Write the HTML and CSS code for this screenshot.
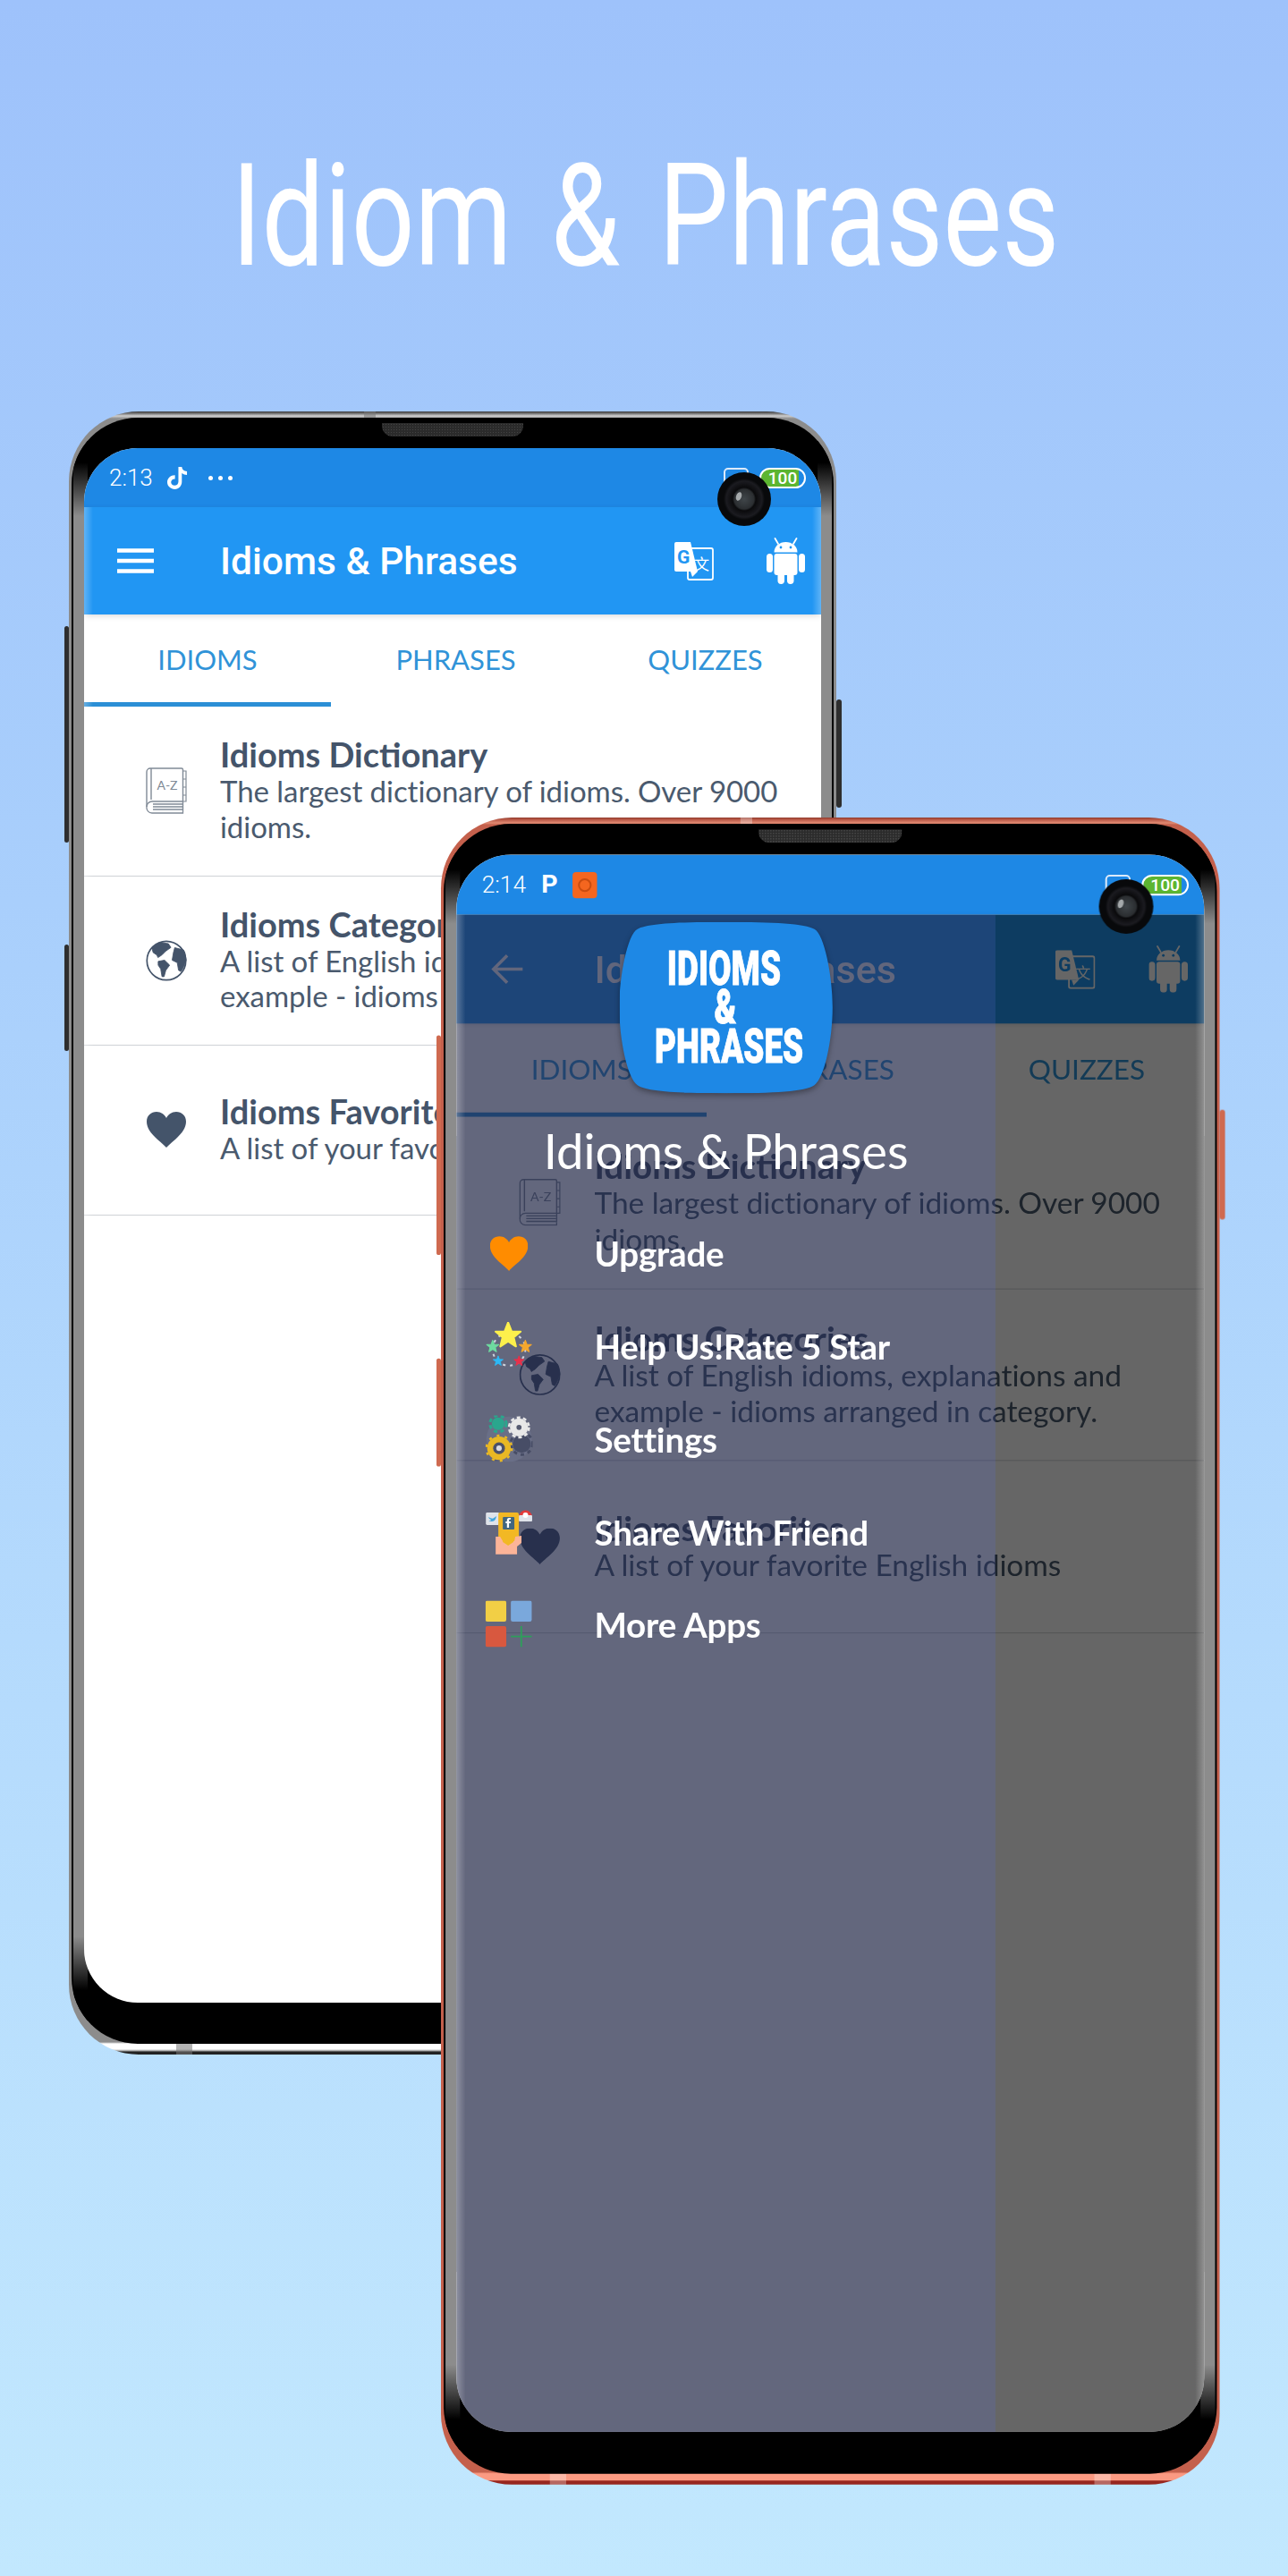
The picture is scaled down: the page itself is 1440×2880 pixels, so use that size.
FILE: index.html
```html
<!DOCTYPE html>
<html lang="en">
<head>
<meta charset="utf-8">
<title>Idiom &amp; Phrases</title>
<link rel="stylesheet" href="styles.css">
</head>
<body>
<svg class="defs" aria-hidden="true">
  <defs>
    <symbol id="android" viewBox="0 0 43 52">
      <path d="M8.500 16.500a13 11.500 0 0 1 26 0z" fill="#fff"/>
      <path d="M13 7 9.500 1M30 7l3.500-6" stroke="#fff" stroke-width="1.800" stroke-linecap="round"/>
      <circle cx="16" cy="11" r="1.400" fill="#2196f3"/><circle cx="27" cy="11" r="1.400" fill="#2196f3"/>
      <rect x="8.500" y="18" width="26" height="24" rx="3" fill="#fff"/>
      <rect x="0" y="18" width="7" height="21" rx="3.500" fill="#fff"/>
      <rect x="36" y="18" width="7" height="21" rx="3.500" fill="#fff"/>
      <rect x="12.500" y="36" width="7.500" height="16" rx="3.700" fill="#fff"/>
      <rect x="23" y="36" width="7.500" height="16" rx="3.700" fill="#fff"/>
    </symbol>
    <symbol id="translate" viewBox="0 0 44 43">
      <rect x="15" y="7" width="28" height="35" rx="2" fill="#2196f3" stroke="#fff" stroke-width="1.800"/>
      <path d="M2 0h16l8 33H2a2 2 0 0 1-2-2V2a2 2 0 0 1 2-2z" fill="#fff"/>
      <path d="M18 33h8l-6 6z" fill="#fff"/>
      <text x="3" y="24" class="svg-g">G</text>
      <text x="22" y="31" class="svg-wen">文</text>
    </symbol>
    <symbol id="book" viewBox="0 0 46 52">
      <path d="M1 44V5a4 4 0 0 1 4-4h35a1.500 1.500 0 0 1 1.500 1.500V48M6 1v35" fill="none" stroke="#808a96" stroke-width="1.400"/>
      <path d="M1 44a6 6 0 0 1 6-6h34.500M1 44a6 6 0 0 0 6 7h34.500V48M8 41h33M8 44h33M8 47h33" fill="none" stroke="#808a96" stroke-width="1.300"/>
      <path d="M41.500 4h3.500v9h-3.500M41.500 13h3.500v9h-3.500M41.500 22h3.500v9h-3.500M41.500 31h3.500v7h-3.500" fill="none" stroke="#808a96" stroke-width="1.200"/>
      <text x="24" y="25" class="svg-az">A-Z</text>
    </symbol>
    <symbol id="globe" viewBox="0 0 54 54">
      <circle cx="27" cy="27" r="25.500" fill="none" stroke="#44546a" stroke-width="2"/>
      <path d="M8 10l10-7 11.600 1.700L33 9.700l-7 5-5 5-5 3.300-1.400-3.300-5-3.400zM16.300 28l8.300-1.600 6.700 6.600-5 6.700L24 48h-2.700l-1.700-10-3.300-5zM38 10l11.600 3 1.700 3.400L53 26l-3 8.700-3.700 6.700-3.300-1.700-1.700-10-6.700-3.300 1.700-10z" fill="#44546a" stroke="#44546a" stroke-width="1" stroke-linejoin="round"/>
    </symbol>
    <symbol id="heart" viewBox="0 0 44 40">
      <path d="M22 40C16 33 0 24 0 11 0 4 5 0 11 0c5 0 9 3 11 7 2-4 6-7 11-7 6 0 11 4 11 11 0 13-16 22-22 29z"/>
    </symbol>
    <symbol id="stars" viewBox="0 0 52 52">
      <circle cx="26" cy="30" r="18" fill="none" stroke="#cfd3de" stroke-width="2" stroke-dasharray="3 5"/>
      <polygon transform="translate(25 15) scale(1.450)" points="0,-10 2.600,-3.300 9.500,-3.100 4.200,1.300 5.900,8.100 0,4.300 -5.900,8.100 -4.200,1.300 -9.500,-3.100 -2.600,-3.300" fill="#fdf04c" stroke="#fdf04c" stroke-width="1.500" stroke-linejoin="round"/>
      <polygon transform="translate(8 27) scale(.7)" points="0,-10 2.600,-3.300 9.500,-3.100 4.200,1.300 5.900,8.100 0,4.300 -5.900,8.100 -4.200,1.300 -9.500,-3.100 -2.600,-3.300" fill="#6edba0" stroke="#6edba0" stroke-width="1.500" stroke-linejoin="round"/>
      <polygon transform="translate(44 27) scale(.7)" points="0,-10 2.600,-3.300 9.500,-3.100 4.200,1.300 5.900,8.100 0,4.300 -5.900,8.100 -4.200,1.300 -9.500,-3.100 -2.600,-3.300" fill="#f6a72c" stroke="#f6a72c" stroke-width="1.500" stroke-linejoin="round"/>
      <polygon transform="translate(14 43) scale(.58)" points="0,-10 2.600,-3.300 9.500,-3.100 4.200,1.300 5.900,8.100 0,4.300 -5.900,8.100 -4.200,1.300 -9.500,-3.100 -2.600,-3.300" fill="#2db8f5" stroke="#2db8f5" stroke-width="1.500" stroke-linejoin="round"/>
      <polygon transform="translate(37 43) scale(.58)" points="0,-10 2.600,-3.300 9.500,-3.100 4.200,1.300 5.900,8.100 0,4.300 -5.900,8.100 -4.200,1.300 -9.500,-3.100 -2.600,-3.300" fill="#e8304a" stroke="#e8304a" stroke-width="1.500" stroke-linejoin="round"/>
    </symbol>
    <symbol id="gears" viewBox="0 0 52 52">
      <circle cx="26" cy="26" r="25" fill="#6a6f87"/>
      <circle cx="40" cy="31" r="10" fill="#474d66"/>
      <circle cx="40" cy="31" r="12" fill="none" stroke="#474d66" stroke-width="3" stroke-dasharray="4 4"/>
      <circle cx="14" cy="9" r="7" fill="#2aa68d"/>
      <circle cx="14" cy="9" r="9" fill="none" stroke="#2aa68d" stroke-width="3" stroke-dasharray="4 3.500"/>
      <circle cx="37" cy="13" r="10" fill="#e8e8e8"/>
      <circle cx="37" cy="13" r="11" fill="none" stroke="#e8e8e8" stroke-width="2.500" stroke-dasharray="4 3"/>
      <circle cx="37" cy="13" r="2.800" fill="#555a70"/>
      <circle cx="15" cy="36" r="13" fill="#e9b824"/>
      <circle cx="15" cy="36" r="14" fill="none" stroke="#e9b824" stroke-width="2.500" stroke-dasharray="3 6"/>
      <circle cx="15" cy="36" r="6.500" fill="#4b5068"/>
      <circle cx="15" cy="36" r="3" fill="#d8dae2"/>
    </symbol>
    <symbol id="share" viewBox="0 0 52 53">
      <rect x="0" y="5" width="15" height="14" rx="1.500" fill="#dfe3ea"/>
      <path d="M3 10c3 2 5 2 6 1l3-2-1 3c-1 3-5 4-8 2 2 0 3-.5 3-1-2-.5-3-2-3-3z" fill="#43a5dc"/>
      <path d="M37 10a7.500 7.500 0 0 1 15 0z" fill="#e23b3b"/>
      <rect x="37" y="8" width="15" height="7" rx="1" fill="#dfe3ea"/>
      <circle cx="44.500" cy="8" r="3" fill="#fff"/>
      <rect x="14" y="5" width="23" height="37" rx="2" fill="#f2b824"/>
      <rect x="19" y="10" width="13" height="14" rx="1" fill="#41667f"/>
      <path d="M26 22v-5h2v-2h-2v-1.500c0-.5.3-.8 1-.8h1V11h-2c-1.500 0-2.300 1-2.300 2.400V15h-1.500v2h1.500v5z" fill="#fff"/>
      <path d="M11 32h5l3 5h13l1-5 7-1v8l-5 4v9H11z" fill="#fcb498"/>
      <path d="M19 33h12v5l-6 4-6-4z" fill="#f2b824"/>
    </symbol>
    <symbol id="apps" viewBox="0 0 52 52">
      <rect x="0" y="0" width="23" height="23" rx="2" fill="#f2cf45"/>
      <rect x="28" y="0" width="23" height="23" rx="2" fill="#7aa8dc"/>
      <rect x="0" y="28" width="23" height="23" rx="2" fill="#d8583f"/>
      <path d="M39.500 28v23M28 39.500h23" stroke="#2e9e5b" stroke-width="1.800"/>
    </symbol>
  </defs>
</svg>

<header class="hero"><h1 class="hero-title">Idiom &amp; Phrases</h1></header>

<section class="phone phone-black">
  <span class="btn btn-l1"></span><span class="btn btn-l2"></span><span class="btn btn-r"></span>
  <span class="strip strip-top"></span><span class="strip strip-bl"></span><span class="strip strip-br"></span>
  <div class="glass">
    <span class="earpiece"></span>
    <div class="screen">
      <div class="status">
        <span class="time">2:13</span>
        <svg class="ic-tiktok" viewBox="0 0 24 26"><path d="M13 0h4c.3 3 2.300 5 6 5.300v4c-2.300 0-4.300-.7-6-2v10c0 5-3.500 8.700-8.200 8.700C4 26 0 22.500 0 17.800S4 9.500 9 9.600V14c-2.400-.2-4.600 1.300-4.600 3.800 0 2.300 1.900 3.900 4.100 3.900 2.500 0 4.500-1.700 4.500-4.500z" fill="#fff"/></svg>
        <span class="dots"><i></i><i></i><i></i></span>
        <span class="status-right"><span class="sim"></span><span class="battery">100</span></span>
      </div>
      <div class="appbar">
        <svg class="ic-nav" viewBox="0 0 41 28"><path d="M0 2.500h41M0 14h41M0 25.500h41" stroke="#fff" stroke-width="4.500"/></svg>
        <span class="app-title">Idioms &amp; Phrases</span>
        <svg class="ic-tr"><use href="#translate"/></svg>
        <svg class="ic-an"><use href="#android"/></svg>
      </div>
      <div class="tabs">
        <span class="tab tab-on">IDIOMS</span><span class="tab">PHRASES</span><span class="tab">QUIZZES</span>
      </div>
      <div class="row"><svg class="row-ic"><use href="#book"/></svg><div class="row-text"><h2 class="row-title">Idioms Dictionary</h2><p class="row-sub">The largest dictionary of idioms. Over 9000 idioms.</p></div></div>
      <div class="row"><svg class="row-ic"><use href="#globe"/></svg><div class="row-text"><h2 class="row-title">Idioms Categories</h2><p class="row-sub">A list of English idioms, explanations and example - idioms arranged in category.</p></div></div>
      <div class="row"><svg class="row-ic row-heart"><use href="#heart"/></svg><div class="row-text"><h2 class="row-title">Idioms Favorites</h2><p class="row-sub">A list of your favorite English idioms</p></div></div>
      <span class="edge"></span>
    </div>
    <span class="camera"></span>
  </div>
</section>

<section class="phone phone-red">
  <span class="btn btn-l1"></span><span class="btn btn-l2"></span><span class="btn btn-r"></span>
  <span class="strip strip-top"></span><span class="strip strip-bl"></span><span class="strip strip-br"></span>
  <div class="glass">
    <span class="earpiece"></span>
    <div class="screen">
      <div class="status">
        <span class="time">2:14</span>
        <span class="ic-p">P</span>
        <span class="ic-orange"><i></i></span>
        <span class="status-right"><span class="sim"></span><span class="battery">100</span></span>
      </div>
      <div class="appbar">
        <svg class="ic-nav" viewBox="0 0 41 34"><path d="M36 17H5M19 2 4 17l15 15" fill="none" stroke="#fff" stroke-width="3.500"/></svg>
        <span class="app-title">Idioms &amp; Phrases</span>
        <svg class="ic-tr"><use href="#translate"/></svg>
        <svg class="ic-an"><use href="#android"/></svg>
      </div>
      <div class="tabs">
        <span class="tab tab-on">IDIOMS</span><span class="tab">PHRASES</span><span class="tab">QUIZZES</span>
      </div>
      <div class="row"><svg class="row-ic"><use href="#book"/></svg><div class="row-text"><h2 class="row-title">Idioms Dictionary</h2><p class="row-sub">The largest dictionary of idioms. Over 9000 idioms.</p></div></div>
      <div class="row"><svg class="row-ic"><use href="#globe"/></svg><div class="row-text"><h2 class="row-title">Idioms Categories</h2><p class="row-sub">A list of English idioms, explanations and example - idioms arranged in category.</p></div></div>
      <div class="row"><svg class="row-ic row-heart"><use href="#heart"/></svg><div class="row-text"><h2 class="row-title">Idioms Favorites</h2><p class="row-sub">A list of your favorite English idioms</p></div></div>
      <div class="scrim"></div>
      <nav class="drawer">
        <div class="logo-wrap"><div class="logo"><span class="logo-text"><span class="l1">IDIOMS</span><span class="l2">&amp;</span><span class="l3">PHRASES</span></span></div></div>
        <div class="drawer-title">Idioms &amp; Phrases</div>
        <a class="item"><svg class="item-heart"><use href="#heart"/></svg><span>Upgrade</span></a>
        <a class="item"><svg class="item-ic"><use href="#stars"/></svg><span>Help Us!Rate 5 Star</span></a>
        <a class="item"><svg class="item-ic"><use href="#gears"/></svg><span>Settings</span></a>
        <a class="item"><svg class="item-ic"><use href="#share"/></svg><span>Share With Friend</span></a>
        <a class="item"><svg class="item-ic"><use href="#apps"/></svg><span>More Apps</span></a>
      </nav>
      <span class="edge"></span>
    </div>
    <span class="camera"></span>
  </div>
</section>
</body>
</html>
```

FILE: styles.css
```css
* { box-sizing: border-box; }
html, body { margin: 0; padding: 0; }
body {
  position: relative;
  width: 1440px;
  height: 2880px;
  overflow: hidden;
  background: linear-gradient(180deg, #9ec2fb 0%, #a9cffc 35%, #c2e8fe 100%);
  font-family: "Lato", "Liberation Sans", sans-serif;
}
.defs { position: absolute; width: 0; height: 0; }
.svg-g { font: 700 21px "Roboto", sans-serif; fill: #2196f3; }
.svg-wen { font: 400 17px "Noto Sans CJK SC", sans-serif; fill: #fff; }
.svg-az { font: 400 14px "Lato", sans-serif; fill: #808a96; text-anchor: middle; }

/* hero */
.hero { height: 460px; padding-top: 162px; text-align: center; }
.hero-title {
  margin: 0 0 0 3px;
  font: 400 159px/159px "Roboto", sans-serif;
  color: #fff;
  word-spacing: 16px;
  transform: scaleX(.781);
  white-space: nowrap;
}

/* device */
.phone {
  position: relative;
  isolation: isolate;
  width: 858px;
  height: 1837px;
  padding: 7px 3px 12px;
  border-radius: 78px;
}
.phone-black {
  margin-left: 77px;
  background: linear-gradient(180deg, #3c3c3c 0, #6c6c6c 2px, #d0d0d0 5px, #8c8c8c 8px, #8c8c8c calc(100% - 14px), #fff calc(100% - 12px), #fff calc(100% - 6px), #999 calc(100% - 4px), #222 calc(100% - 3px), #222 100%);
}
.phone-red {
  position: absolute;
  z-index: 1;
  left: 493px;
  top: 914px;
  transform: scale(1.0146);
  transform-origin: 0 0;
  background: linear-gradient(180deg, #8e3a2c 0, #b65544 2px, #e08a72 6px, #c4604c 8px, #c4604c calc(100% - 14px), #fb9a82 calc(100% - 12px), #fb9a82 calc(100% - 5px), #97261f calc(100% - 4px), #97261f 100%);
}
.btn { position: absolute; border-radius: 3px; }
.phone-black .btn { background: #2e2e2e; }
.phone-red .btn { background: #cf6a50; }
.btn-l1 { left: -5px; top: 240px; width: 5px; height: 242px; }
.btn-l2 { left: -5px; top: 596px; width: 5px; height: 119px; }
.btn-r { right: -6px; top: 322px; width: 6px; height: 121px; }
.strip { position: absolute; background: rgba(255,255,255,.3); }
.phone-black .strip { background: rgba(120,120,120,.55); }
.strip-top { left: 330px; top: 0; width: 13px; height: 7px; }
.strip-bl { left: 120px; bottom: 0; width: 18px; height: 12px; }
.strip-br { left: 720px; bottom: 0; width: 18px; height: 12px; }

.glass {
  position: relative;
  height: 100%;
  padding: 34px 14px 46px;
  background: #000;
  border-radius: 74px;
  overflow: hidden;
}
.glass::before, .glass::after {
  content: "";
  position: absolute;
  top: 0;
  bottom: 0;
  width: 16px;
  background: linear-gradient(180deg, #000 50px, #8c8c8c 110px, #8c8c8c calc(100% - 120px), #000 calc(100% - 60px));
}
.glass::before { left: 2px; }
.glass::after { right: 2px; }
.earpiece {
  position: absolute;
  left: 50%;
  top: 6px;
  width: 158px;
  height: 15px;
  margin-left: -79px;
  border-radius: 0 0 12px 12px;
  background: #2b2b2b radial-gradient(circle, #444 0, #444 .8px, transparent 1px) 0 0 / 3px 3px;
}
.screen {
  position: relative;
  z-index: 1;
  display: flex;
  flex-direction: column;
  height: 100%;
  background: #fff;
  border-radius: 60px;
  overflow: hidden;
}
.edge {
  position: absolute;
  inset: 66px 0 0;
  background: linear-gradient(90deg, rgba(255,255,255,.28), rgba(255,255,255,0) 10px, rgba(255,255,255,0) calc(100% - 10px), rgba(255,255,255,.28));
}
.camera {
  position: absolute;
  z-index: 2;
  left: 722px;
  top: 61px;
  width: 60px;
  height: 60px;
  border-radius: 50%;
  background: radial-gradient(circle at 50% 50%, #40464a 0, #2b2e31 11px, #0a0a0c 13px, #1b1b20 20px, #08090b 23px);
}
.camera::after {
  content: "";
  position: absolute;
  left: 21px;
  top: 22px;
  width: 6px;
  height: 10px;
  border-radius: 50%;
  background: #a5a9ab;
  transform: rotate(20deg);
}

/* status bar */
.status {
  flex: none;
  display: flex;
  align-items: center;
  height: 66px;
  padding: 0 17px 0 28px;
  background: #1e88e5;
}
.time { font: 300 26px/1 "Roboto", sans-serif; color: #fff; }
.ic-tiktok { width: 23px; height: 25px; margin-left: 16px; }
.dots { display: flex; gap: 6px; margin-left: 23px; }
.dots i { width: 5px; height: 5px; border-radius: 50%; background: #fff; }
.ic-p { margin-left: 17px; font: 700 28px/1 "Roboto", sans-serif; color: #fff; }
.ic-orange {
  display: flex;
  align-items: center;
  justify-content: center;
  width: 27px;
  height: 29px;
  margin-left: 16px;
  border-radius: 4px;
  background: #f4661f;
}
.ic-orange i { width: 15px; height: 15px; border: 2px solid #c94c10; border-radius: 50%; }
.status-right { display: flex; align-items: center; gap: 12px; margin-left: auto; }
.sim { width: 28px; height: 23px; border: 2px solid #dceafa; border-radius: 5px; }
.battery {
  width: 52px;
  height: 23px;
  border: 2px solid #fff;
  border-radius: 12px;
  background: linear-gradient(90deg, #5cb531 88%, #1e88e5 88%);
  font: 500 19px/19px "Roboto", sans-serif;
  color: #fff;
  text-align: center;
}

/* app bar */
.appbar {
  position: relative;
  flex: none;
  display: flex;
  align-items: center;
  height: 120px;
  padding: 0 18px 0 37px;
  background: #2196f3;
  box-shadow: 0 2px 6px rgba(0,0,0,.14);
}
.ic-nav { width: 41px; height: 34px; flex: none; }
.app-title {
  flex: 1;
  margin-left: 74px;
  padding-top: 2px;
  font: 500 42.500px/1 "Roboto", sans-serif;
  color: #fff;
  white-space: nowrap;
}
.ic-tr { width: 44px; height: 43px; flex: none; }
.ic-an { width: 43px; height: 52px; margin-left: 59px; flex: none; }

/* tabs */
.tabs { flex: none; display: flex; height: 103px; overflow: hidden; }
.tab {
  flex: 0 0 279px;
  font: 400 31px/101px "Lato", sans-serif;
  color: #3093d8;
  text-align: center;
}
.tab-on { flex-basis: 276px; box-shadow: inset 0 -5px 0 #2b8fd6; }

/* list */
.row {
  flex: none;
  display: flex;
  align-items: center;
  height: 189.500px;
  padding: 0 24px 0 69px;
  border-bottom: 1.500px solid #cfd2d6;
}
.row-ic { flex: none; width: 46px; height: 52px; margin-right: 37px; fill: #44546a; }
.row-heart { height: 40px; }
.row-title { margin: 0 0 3px; font: 700 38px/38px "Lato", sans-serif; color: #44546a; }
.row-sub { margin: 0; font: 400 33px/39.500px "Lato", sans-serif; letter-spacing: -.05px; color: #4a5a6e; }

/* drawer */
.scrim { position: absolute; inset: 66px 0 0; background: rgba(0,0,0,.6); }
.drawer {
  position: absolute;
  left: 0;
  top: 66px;
  bottom: 0;
  width: 594px;
  display: flex;
  flex-direction: column;
  padding-top: 8px;
  background: rgba(88,106,206,.22);
}
.logo-wrap {
  align-self: center;
  flex: none;
  width: 235px;
  height: 189px;
  filter: drop-shadow(0 3px 3px rgba(0,0,0,.35));
}
.logo {
  display: flex;
  align-items: center;
  justify-content: center;
  height: 100%;
  background: #1e88e5;
  clip-path: path("M117 0C170 0 205 2 215 8C226 14 235 60 235 94C235 130 226 172 215 180C205 187 170 189 117 189C65 189 30 187 20 180C9 172 0 130 0 94C0 60 9 14 20 8C30 2 65 0 117 0Z");
}
.logo-text {
  display: flex;
  flex-direction: column;
  align-items: center;
  font: 900 52px/43px "Roboto", sans-serif;
  color: #fff;
  -webkit-text-stroke: .8px #fff;
  transform: scaleX(.7);
}
.l1 { margin-right: 6px; }
.l2 { margin-right: 2px; }
.l3 { margin-left: 10px; }
.drawer-title {
  flex: none;
  height: 125px;
  font: 400 53.500px/125px "Lato", sans-serif;
  color: #fff;
  text-align: center;
}
.item {
  flex: none;
  display: flex;
  align-items: center;
  height: 102.300px;
  padding-left: 32px;
  font: 700 38px/1 "Lato", sans-serif;
  letter-spacing: -.2px;
  color: #fff;
}
.item-ic { flex: none; width: 52px; height: 52px; margin-right: 68px; }
.item-heart { flex: none; width: 42px; height: 39px; margin: 0 73px 0 5px; fill: #ff8c00; }
```
